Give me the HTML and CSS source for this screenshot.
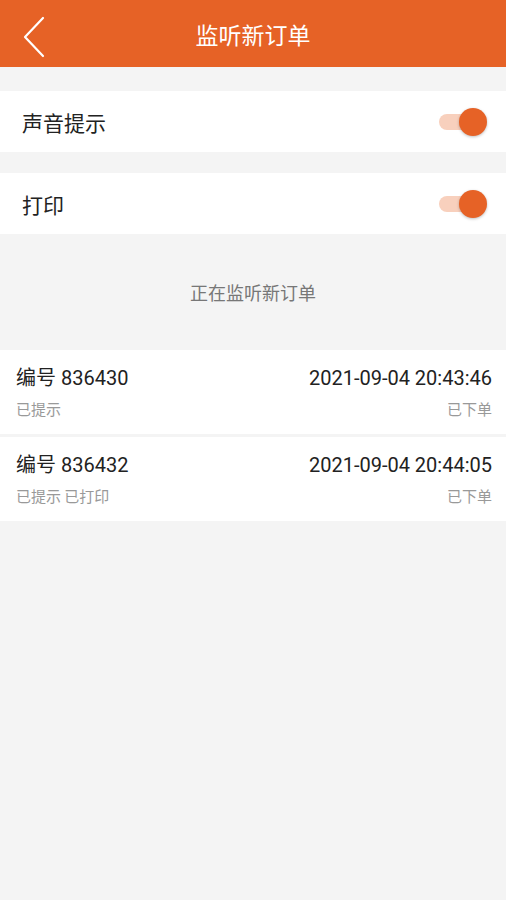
FILE: index.html
```html
<!DOCTYPE html>
<html lang="zh">
<head>
<meta charset="UTF-8">
<meta name="viewport" content="width=device-width, initial-scale=1.0">
<title>监听新订单</title>
<link rel="stylesheet" href="styles.css">
</head>
<body>
  <div class="header">
    <svg class="back" width="24" height="42" viewBox="0 0 24 42">
      <path d="M21 2 L3 21 L21 40" fill="none" stroke="#fff" stroke-width="2.2" stroke-linecap="round" stroke-linejoin="round"/>
    </svg>
    <div class="title">监听新订单</div>
  </div>

  <div class="setting first">
    <span class="label">声音提示</span>
    <div class="switch"><div class="track"></div><div class="thumb"></div></div>
  </div>
  <div class="setting">
    <span class="label">打印</span>
    <div class="switch"><div class="track"></div><div class="thumb"></div></div>
  </div>

  <div class="status">正在监听新订单</div>

  <div class="orders">
    <div class="order">
      <div class="line">
        <span class="num">编号 836430</span>
        <span class="time">2021-09-04 20:43:46</span>
      </div>
      <div class="line sub">
        <span>已提示</span>
        <span>已下单</span>
      </div>
    </div>
    <div class="order">
      <div class="line">
        <span class="num">编号 836432</span>
        <span class="time">2021-09-04 20:44:05</span>
      </div>
      <div class="line sub">
        <span>已提示 已打印</span>
        <span>已下单</span>
      </div>
    </div>
  </div>
</body>
</html>
```

FILE: styles.css
```css
body {
  margin: 0;
  background: #f4f4f4;
  font-family: "Noto Sans CJK SC", "Noto Sans", Roboto, sans-serif;
  color: #222;
}
.header {
  height: 67px;
  background: #e66226;
  display: flex;
  align-items: center;
  justify-content: center;
  position: relative;
}
.back {
  position: absolute;
  left: 22px;
  top: 16px;
}
.title {
  color: #fff;
  font-size: 23px;
}
.setting {
  background: #fff;
  height: 61px;
  margin-top: 21px;
  display: flex;
  align-items: center;
  justify-content: space-between;
  padding: 0 19px 0 22px;
}
.setting.first {
  margin-top: 24px;
}
.label {
  font-size: 21px;
  color: #222;
}
.switch {
  position: relative;
  width: 48px;
  height: 30px;
}
.track {
  position: absolute;
  left: 0;
  top: 7px;
  width: 38px;
  height: 16px;
  border-radius: 8px;
  background: #f8d0bd;
}
.thumb {
  position: absolute;
  right: 0;
  top: 1px;
  width: 28px;
  height: 28px;
  border-radius: 50%;
  background: #e66226;
  box-shadow: 0 1px 3px rgba(0, 0, 0, 0.25);
}
.status {
  height: 116px;
  display: flex;
  align-items: center;
  justify-content: center;
  font-size: 18px;
  color: #777;
}
.orders {
  display: flex;
  flex-direction: column;
  gap: 3px;
}
.order {
  background: #fff;
  height: 84px;
  box-sizing: border-box;
  padding: 16px 14px 0 16px;
  display: flex;
  flex-direction: column;
  gap: 9px;
}
.line {
  display: flex;
  justify-content: space-between;
  align-items: center;
  font-size: 20px;
  line-height: 24px;
  color: #222;
}
.time,
.num {
  font-family: Roboto, "Noto Sans CJK SC", sans-serif;
}
.line.sub {
  font-size: 15px;
  line-height: 20px;
  color: #999;
}
```
